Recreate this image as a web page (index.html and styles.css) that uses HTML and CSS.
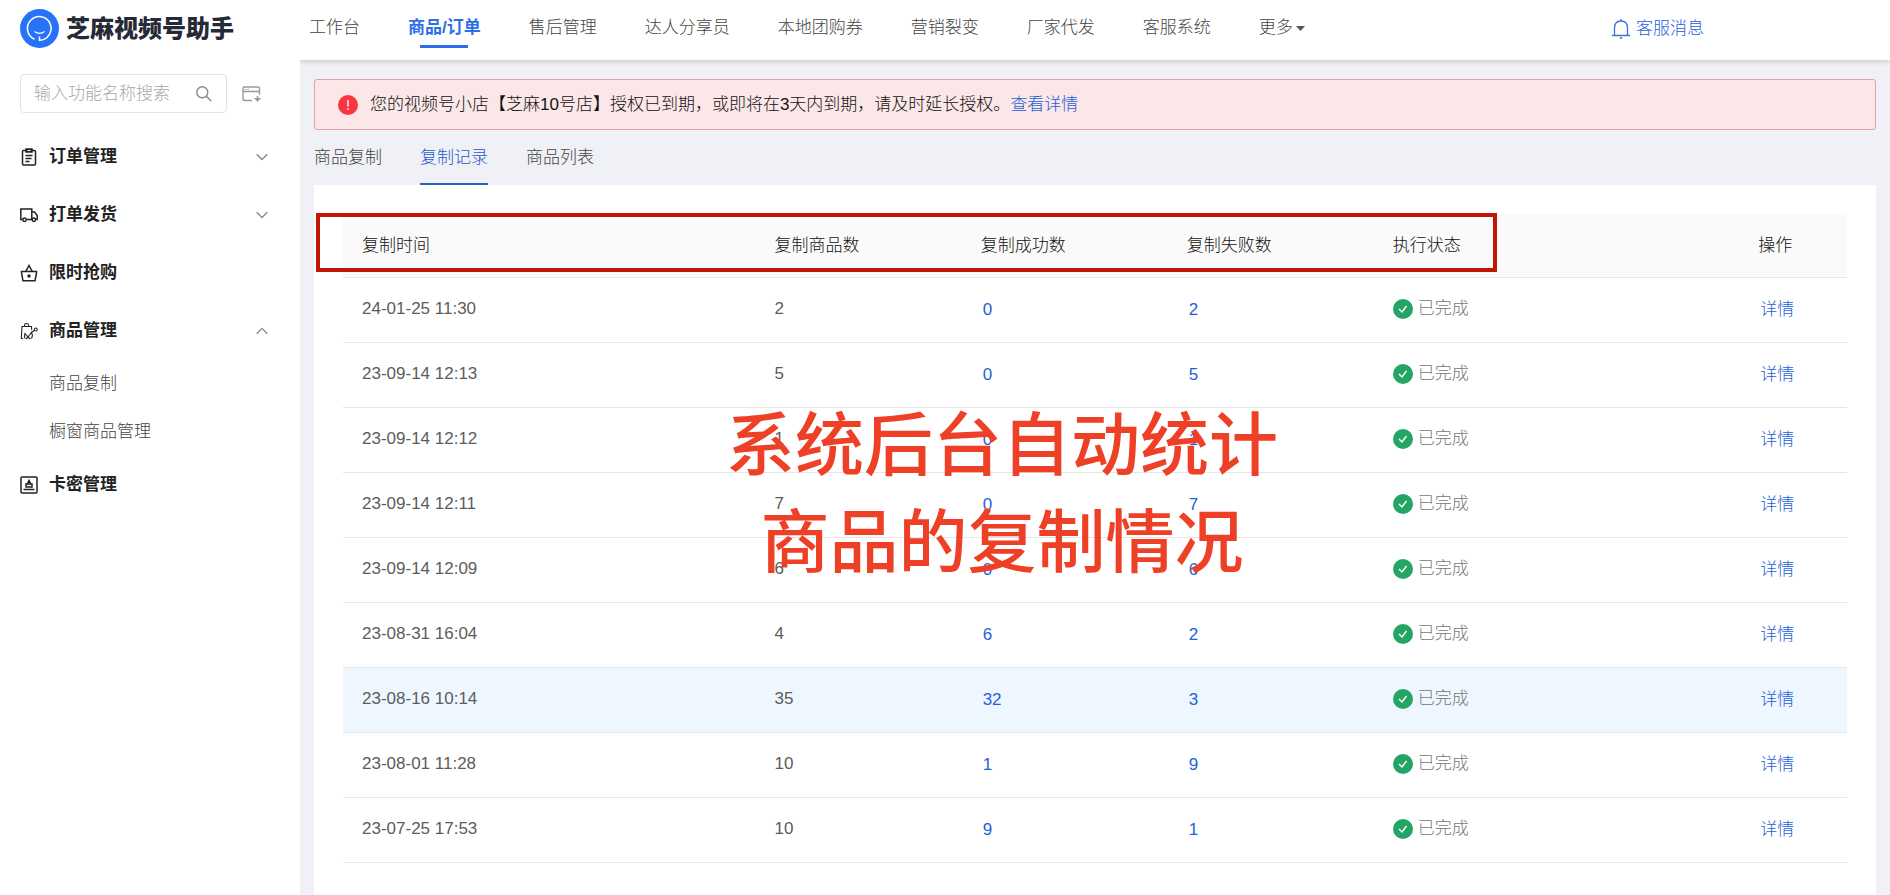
FILE: index.html
```html
<!DOCTYPE html>
<html lang="zh-CN">
<head>
<meta charset="utf-8">
<title>芝麻视频号助手</title>
<link rel="stylesheet" href="styles.css">
</head>
<body>
<div class="app">
  <aside class="sidebar">
    <div class="brand">
      <svg class="brand-mark" viewBox="0 0 39 39" aria-hidden="true">
        <circle cx="19.5" cy="19.5" r="19.5" fill="#2673fa"/>
        <path d="M14.5 30.2A11.8 11.8 0 1 1 19.5 31.2V27.6" fill="none" stroke="#fff" stroke-width="1.5"/>
        <path d="M14.5 22.5q5 3.6 10 0" fill="none" stroke="#fff" stroke-width="1.3"/>
      </svg>
      <span class="brand-name">芝麻视频号助手</span>
    </div>
    <div class="search-row">
      <div class="search">
        <input class="search-input" type="text" placeholder="输入功能名称搜索" aria-label="输入功能名称搜索">
        <button class="icon-button" type="button" aria-label="搜索">
          <svg width="16" height="16" viewBox="0 0 16 16"><circle cx="6.3" cy="6.3" r="5.5"/><path d="M10.3 10.3l5 5"/></svg>
        </button>
      </div>
      <button class="icon-button collapse" type="button" aria-label="收起">
        <svg width="19" height="16" viewBox="0 0 19 16"><path d="M10 14.5H2.5q-1.5 0-1.5-1.5V2.5Q1 1 2.500 1h13.500q1.500 0 1.500 1.500V8.500M1 5.500h16.500"/><path d="M3 3.300h1.200M5.500 3.300h1.200" stroke-width="1.200"/><path d="M15.500 10v3"/><path d="M13.500 12.800l2 2 2-2z" fill="#999"/></svg>
      </button>
    </div>
    <nav class="menu" aria-label="功能菜单">
      <button class="menu-item" type="button">
        <svg class="menu-icon" viewBox="0 0 18 18"><rect x="2.500" y="2.500" width="13" height="14.500" rx="1"/><path d="M6 1h6v3H6z" fill="#222"/><path d="M7.500 2.500h3" stroke="#fff" stroke-width="1"/><path d="M5.500 7.500h7M5.500 10.500h6M5.500 13.500h4"/></svg>
        <span>订单管理</span>
        <svg class="chevron" viewBox="0 0 12 8"><path d="M.7 1.200L6 6.500l5.300-5.300"/></svg>
      </button>
      <button class="menu-item" type="button">
        <svg class="menu-icon wide" viewBox="0 0 18 18"><path d="M2.500 13.500H.8V3h11v10.500H6.500M11.800 6h2.700l2.700 3.500v4h-1.400"/><circle cx="4.500" cy="13.800" r="1.700"/><circle cx="13.800" cy="13.800" r="1.700"/></svg>
        <span>打单发货</span>
        <svg class="chevron" viewBox="0 0 12 8"><path d="M.7 1.200L6 6.500l5.300-5.300"/></svg>
      </button>
      <button class="menu-item" type="button">
        <svg class="menu-icon" viewBox="0 0 18 18"><path d="M1.500 7.500h15V9l-1.500 7.800H3L1.500 9zM5.800 7.300L9 1.500l3.200 5.800"/><circle cx="9" cy="12" r="1" fill="#222"/></svg>
        <span>限时抢购</span>
      </button>
      <button class="menu-item" type="button">
        <svg class="menu-icon thin" viewBox="0 0 18 18"><path d="M3 16.500H1.300L2 4.500h9.500l.2 3.500M4.500 4.500V3q0-1.500 2-1.500T8.700 3v1.500M5 16.500q-1-2.500 0-5l3 3.500 3.500-4.500 1 3-1 3M8 15l-2 2M8 15l2.500 2M11.500 10.500l3-2.200"/><circle cx="15.800" cy="7.500" r="1.500"/></svg>
        <span>商品管理</span>
        <svg class="chevron" viewBox="0 0 12 8"><path d="M.7 6.700L6 1.400l5.300 5.300"/></svg>
      </button>
      <a class="submenu-item" href="#">商品复制</a>
      <a class="submenu-item" href="#">橱窗商品管理</a>
      <button class="menu-item" type="button">
        <svg class="menu-icon" viewBox="0 0 18 18"><rect x="1" y="1" width="16" height="16" rx="1"/><path d="M3.500 13.500h11M6 11h6V8H6zM9 4.500L7.200 8h3.600z"/></svg>
        <span>卡密管理</span>
      </button>
    </nav>
  </aside>

  <div class="main">
    <header class="topbar">
      <nav class="topnav" aria-label="主导航">
        <a href="#">工作台</a>
        <a class="active" href="#">商品/订单</a>
        <a href="#">售后管理</a>
        <a href="#">达人分享员</a>
        <a href="#">本地团购券</a>
        <a href="#">营销裂变</a>
        <a href="#">厂家代发</a>
        <a href="#">客服系统</a>
        <a class="more" href="#">更多<svg width="9" height="5" viewBox="0 0 9 5"><path d="M0 0h9L4.500 5z" fill="#555"/></svg></a>
      </nav>
      <a class="messages" href="#">
        <svg width="18" height="20" viewBox="0 0 18 20"><path d="M0 16.500h18M2.500 16.500V9q0-7 6.500-7t6.500 7v7.500M9 0v2M7.800 19h2.400"/></svg>
        <span>客服消息</span>
      </a>
    </header>

    <main class="content">
      <div class="alert" role="alert">
        <svg width="20" height="20" viewBox="0 0 20 20"><circle cx="10" cy="10" r="10" fill="#fa3440"/><path d="M10 5v6.500M10 13.200v1.800" stroke="#fff" stroke-width="1.400"/></svg>
        <p>您的视频号小店【芝麻10号店】授权已到期，或即将在3天内到期，请及时延长授权。<a href="#">查看详情</a></p>
      </div>
      <nav class="tabs" aria-label="商品复制">
        <a href="#">商品复制</a>
        <a class="active" href="#">复制记录</a>
        <a href="#">商品列表</a>
      </nav>
      <section class="panel">
        <div class="table-wrap">
          <table class="records">
            <colgroup><col class="c-time"><col class="c-num"><col class="c-num"><col class="c-num"><col class="c-state"><col class="c-action"></colgroup>
            <thead>
              <tr><th>复制时间</th><th>复制商品数</th><th>复制成功数</th><th>复制失败数</th><th>执行状态</th><th>操作</th></tr>
            </thead>
            <tbody>
              <tr><td>24-01-25 11:30</td><td>2</td><td><a href="#">0</a></td><td><a href="#">2</a></td><td><span class="state"><svg viewBox="0 0 20 20"><circle cx="10" cy="10" r="10"/><path d="M6 10l3 3 4.500-6"/></svg>已完成</span></td><td><a href="#">详情</a></td></tr>
              <tr><td>23-09-14 12:13</td><td>5</td><td><a href="#">0</a></td><td><a href="#">5</a></td><td><span class="state"><svg viewBox="0 0 20 20"><circle cx="10" cy="10" r="10"/><path d="M6 10l3 3 4.500-6"/></svg>已完成</span></td><td><a href="#">详情</a></td></tr>
              <tr><td>23-09-14 12:12</td><td>1</td><td><a href="#">0</a></td><td><a href="#">1</a></td><td><span class="state"><svg viewBox="0 0 20 20"><circle cx="10" cy="10" r="10"/><path d="M6 10l3 3 4.500-6"/></svg>已完成</span></td><td><a href="#">详情</a></td></tr>
              <tr><td>23-09-14 12:11</td><td>7</td><td><a href="#">0</a></td><td><a href="#">7</a></td><td><span class="state"><svg viewBox="0 0 20 20"><circle cx="10" cy="10" r="10"/><path d="M6 10l3 3 4.500-6"/></svg>已完成</span></td><td><a href="#">详情</a></td></tr>
              <tr><td>23-09-14 12:09</td><td>6</td><td><a href="#">0</a></td><td><a href="#">6</a></td><td><span class="state"><svg viewBox="0 0 20 20"><circle cx="10" cy="10" r="10"/><path d="M6 10l3 3 4.500-6"/></svg>已完成</span></td><td><a href="#">详情</a></td></tr>
              <tr><td>23-08-31 16:04</td><td>4</td><td><a href="#">6</a></td><td><a href="#">2</a></td><td><span class="state"><svg viewBox="0 0 20 20"><circle cx="10" cy="10" r="10"/><path d="M6 10l3 3 4.500-6"/></svg>已完成</span></td><td><a href="#">详情</a></td></tr>
              <tr class="hovered"><td>23-08-16 10:14</td><td>35</td><td><a href="#">32</a></td><td><a href="#">3</a></td><td><span class="state"><svg viewBox="0 0 20 20"><circle cx="10" cy="10" r="10"/><path d="M6 10l3 3 4.500-6"/></svg>已完成</span></td><td><a href="#">详情</a></td></tr>
              <tr><td>23-08-01 11:28</td><td>10</td><td><a href="#">1</a></td><td><a href="#">9</a></td><td><span class="state"><svg viewBox="0 0 20 20"><circle cx="10" cy="10" r="10"/><path d="M6 10l3 3 4.500-6"/></svg>已完成</span></td><td><a href="#">详情</a></td></tr>
              <tr><td>23-07-25 17:53</td><td>10</td><td><a href="#">9</a></td><td><a href="#">1</a></td><td><span class="state"><svg viewBox="0 0 20 20"><circle cx="10" cy="10" r="10"/><path d="M6 10l3 3 4.500-6"/></svg>已完成</span></td><td><a href="#">详情</a></td></tr>
            </tbody>
          </table>
          <div class="header-mark"></div>
          <p class="caption">系统后台自动统计<br>商品的复制情况</p>
        </div>
      </section>
    </main>
  </div>
</div>
</body>
</html>
```

FILE: styles.css
```css
* {
  box-sizing: border-box;
}

body {
  margin: 0;
  background: #fff;
  color: #5c5c5c;
  font-family: "Liberation Sans", "Noto Sans CJK SC", sans-serif;
  font-size: 17px;
  font-weight: 300;
  line-height: 24px;
}

a {
  color: #2560d8;
  text-decoration: none;
}

p {
  margin: 0;
}

button,
input {
  margin: 0;
  padding: 0;
  border: 0;
  background: none;
  font: inherit;
}

svg {
  flex: none;
}

.app {
  display: flex;
  min-height: 100vh;
}

/* Sidebar */

.sidebar {
  flex: none;
  width: 300px;
  padding-top: 9px;
}

.brand {
  display: flex;
  align-items: center;
  gap: 7px;
  padding-left: 20px;
}

.brand-mark {
  width: 39px;
  height: 39px;
}

.brand-name {
  color: #252a36;
  font-size: 24px;
  font-weight: 900;
  line-height: 39px;
}

.search-row {
  display: flex;
  align-items: center;
  gap: 15px;
  margin: 26px 0 15px 20px;
}

.search {
  display: flex;
  align-items: center;
  width: 207px;
  height: 39px;
  padding: 0 14px 0 13px;
  border: 1px solid #e2e2e2;
  border-radius: 4px;
}

.search-input {
  flex: 1;
  min-width: 0;
  outline: none;
}

.search-input::placeholder {
  color: #a8a8a8;
  opacity: 1;
}

.icon-button {
  display: flex;
}

.icon-button svg {
  fill: none;
  stroke: #888;
  stroke-width: 1.4;
}

.icon-button.collapse svg {
  stroke: #999;
}

.menu {
  display: flex;
  flex-direction: column;
}

.menu-item {
  display: flex;
  align-items: center;
  gap: 11px;
  height: 58px;
  padding: 0 32px 0 20px;
  color: #222;
  font-weight: 700;
}

.menu-icon {
  width: 18px;
  height: 18px;
  fill: none;
  stroke: #222;
  stroke-width: 1.5;
}

.menu-icon.thin {
  stroke-width: 1.1;
}

.menu-icon.wide {
  overflow: visible;
}

.chevron {
  width: 12px;
  height: 8px;
  margin-left: auto;
  fill: none;
  stroke: #888;
  stroke-width: 1.3;
}

.submenu-item {
  padding-left: 49px;
  color: #444;
  line-height: 48px;
}

/* Top bar */

.main {
  display: flex;
  flex: 1;
  flex-direction: column;
  min-width: 0;
}

.topbar {
  display: flex;
  align-items: center;
  justify-content: space-between;
  z-index: 1;
  height: 60px;
  padding: 0 186px 0 9px;
  background: #fff;
  box-shadow: 0 1px 6px rgba(0, 0, 0, 0.2);
  clip-path: inset(0 0 -10px 0);
}

.topnav {
  display: flex;
  gap: 48px;
  white-space: nowrap;
}

.topnav a {
  display: flex;
  flex-direction: column;
  align-items: center;
  height: 60px;
  padding-top: 16px;
  color: #444;
}

.topnav .active {
  color: #2e6fe8;
  font-weight: 700;
}

.topnav .active::after {
  width: 48px;
  height: 3px;
  margin-top: 5px;
  background: #2e6fe8;
  content: "";
}

.topnav .more {
  flex-direction: row;
  align-items: flex-start;
  gap: 3px;
}

.more svg {
  margin-top: 10px;
}

.messages {
  display: flex;
  align-items: center;
  gap: 6px;
  padding-bottom: 3px;
}

.messages svg {
  fill: none;
  stroke: #3a6fdc;
  stroke-width: 1.3;
}

/* Content */

.content {
  display: flex;
  flex: 1;
  flex-direction: column;
  padding: 19px 14px 0;
  background: #eff1f6;
}

.alert {
  display: flex;
  align-items: center;
  gap: 12px;
  height: 51px;
  padding: 0 23px;
  border: 1px solid #e3a0a5;
  border-radius: 3px;
  background: #fbe6e8;
  color: #111;
}

.tabs {
  display: flex;
  gap: 38px;
}

.tabs a {
  height: 55px;
  border-bottom: 2px solid transparent;
  color: #444;
  line-height: 56px;
}

.tabs .active {
  border-color: #2b62c0;
  color: #1f58cc;
}

.panel {
  flex: 1;
  padding: 29px 29px 32px;
  background: #fff;
}

.table-wrap {
  position: relative;
}

.records {
  width: 100%;
  border-spacing: 0;
  table-layout: fixed;
}

.c-time {
  width: 27.5%;
}

.c-num {
  width: 13.7%;
}

.c-state {
  width: 24.3%;
}

.c-action {
  width: 7.1%;
}

.records th,
.records td {
  height: 65px;
  padding: 0 18px 2px;
  border-bottom: 1px solid #e6e6e6;
  text-align: left;
}

.records th {
  height: 64px;
  padding-bottom: 0;
  background: #fafafa;
  color: #111;
  font-weight: 300;
}

.records th:first-child,
.records td:first-child {
  padding-left: 19px;
}

.records th:last-child {
  border-top-right-radius: 6px;
}

.records td a {
  display: inline-block;
  padding: 2px 0 0 2px;
}

.hovered td {
  background: #eef7ff;
}

.state {
  display: flex;
  align-items: center;
  gap: 5px;
  color: #777;
}

.state svg {
  width: 20px;
  height: 20px;
  fill: #24a566;
}

.state path {
  fill: none;
  stroke: #fff;
  stroke-width: 1.4;
}

/* Annotations laid over the table */

.header-mark {
  position: absolute;
  top: -1px;
  right: 350px;
  left: -27px;
  height: 59px;
  border: 4px solid #be1804;
}

.caption {
  position: absolute;
  top: 184px;
  left: 383px;
  color: #ee4026;
  font-size: 69px;
  font-weight: 500;
  line-height: 97px;
  text-align: center;
  white-space: nowrap;
}
```
